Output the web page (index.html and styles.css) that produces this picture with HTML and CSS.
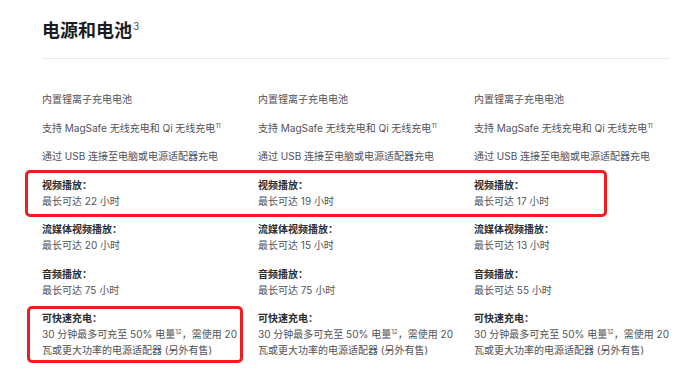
FILE: index.html
```html
<!DOCTYPE html>
<html lang="zh-CN">
<head>
<meta charset="utf-8">
<title>电源和电池</title>
<link rel="stylesheet" href="styles.css">
</head>
<body>
<section class="section">
  <h2 class="title">电源和电池<sup class="title-sup">3</sup></h2>
  <div class="divider"></div>
  <div class="rows">
    <div class="row">
      <p class="cell">内置锂离子充电电池</p>
      <p class="cell">内置锂离子充电电池</p>
      <p class="cell">内置锂离子充电电池</p>
    </div>
    <div class="row">
      <p class="cell">支持 MagSafe 无线充电和 Qi 无线充电<sup class="fn">11</sup></p>
      <p class="cell">支持 MagSafe 无线充电和 Qi 无线充电<sup class="fn">11</sup></p>
      <p class="cell">支持 MagSafe 无线充电和 Qi 无线充电<sup class="fn">11</sup></p>
    </div>
    <div class="row">
      <p class="cell">通过 USB 连接至电脑或电源适配器充电</p>
      <p class="cell">通过 USB 连接至电脑或电源适配器充电</p>
      <p class="cell">通过 USB 连接至电脑或电源适配器充电</p>
    </div>
    <div class="row row-marked">
      <div class="cell"><span class="label">视频播放：</span><span class="value">最长可达 22 小时</span></div>
      <div class="cell"><span class="label">视频播放：</span><span class="value">最长可达 19 小时</span></div>
      <div class="cell"><span class="label">视频播放：</span><span class="value">最长可达 17 小时</span></div>
      <div class="mark mark-wide"></div>
    </div>
    <div class="row">
      <div class="cell"><span class="label">流媒体视频播放：</span><span class="value">最长可达 20 小时</span></div>
      <div class="cell"><span class="label">流媒体视频播放：</span><span class="value">最长可达 15 小时</span></div>
      <div class="cell"><span class="label">流媒体视频播放：</span><span class="value">最长可达 13 小时</span></div>
    </div>
    <div class="row">
      <div class="cell"><span class="label">音频播放：</span><span class="value">最长可达 75 小时</span></div>
      <div class="cell"><span class="label">音频播放：</span><span class="value">最长可达 75 小时</span></div>
      <div class="cell"><span class="label">音频播放：</span><span class="value">最长可达 55 小时</span></div>
    </div>
    <div class="row row-marked">
      <div class="cell"><span class="label">可快速充电：</span><span class="value">30 分钟最多可充至 50% 电量<sup class="fn">12</sup>，需使用 20<br>瓦或更大功率的电源适配器 (另外有售)</span></div>
      <div class="cell"><span class="label">可快速充电：</span><span class="value">30 分钟最多可充至 50% 电量<sup class="fn">12</sup>，需使用 20<br>瓦或更大功率的电源适配器 (另外有售)</span></div>
      <div class="cell"><span class="label">可快速充电：</span><span class="value">30 分钟最多可充至 50% 电量<sup class="fn">12</sup>，需使用 20<br>瓦或更大功率的电源适配器 (另外有售)</span></div>
      <div class="mark mark-narrow"></div>
    </div>
  </div>
</section>
</body>
</html>
```
FILE: styles.css
```css
html, body {
  margin: 0;
  padding: 0;
  background: #ffffff;
}

body {
  font-family: Inter, "Noto Sans CJK SC", "Noto Sans", sans-serif;
  color: #333336;
  width: 700px;
  height: 380px;
  overflow: hidden;
}

.section {
  padding: 19px 30px 0 42px;
}

.title {
  margin: 0;
  font-size: 18px;
  line-height: 24px;
  font-weight: 600;
  color: #1d1d1f;
  letter-spacing: 0;
}

.title-sup {
  font-size: 10px;
  font-weight: 400;
  vertical-align: 7px;
  line-height: 0;
  margin-left: 1px;
  color: #55555a;
}

.divider {
  margin-top: 15px;
  width: 628px;
  height: 1px;
  background: #e8e8ea;
}

.rows {
  margin-top: 32px;
  display: flex;
  flex-direction: column;
  gap: 12.5px;
}

.row {
  position: relative;
  display: grid;
  grid-template-columns: 216px 216px 216px;
}

.cell {
  margin: 0;
  font-size: 10px;
  line-height: 16px;
  color: #525256;
  display: flex;
  flex-direction: column;
}

p.cell {
  display: block;
}

.label {
  font-weight: 700;
  color: #2c2c2e;
}

.value {
  color: #525256;
  font-size: 10px;
}

.fn {
  font-size: 6.5px;
  line-height: 0;
  vertical-align: 4px;
}

.mark {
  position: absolute;
  border: 3.5px solid #f21c1c;
  border-radius: 5px;
  box-sizing: border-box;
  pointer-events: none;
}

.mark-wide {
  left: -17px;
  top: -7px;
  width: 582px;
  height: 47px;
}

.mark-narrow {
  left: -15px;
  top: -4px;
  width: 216px;
  height: 57px;
}
```
